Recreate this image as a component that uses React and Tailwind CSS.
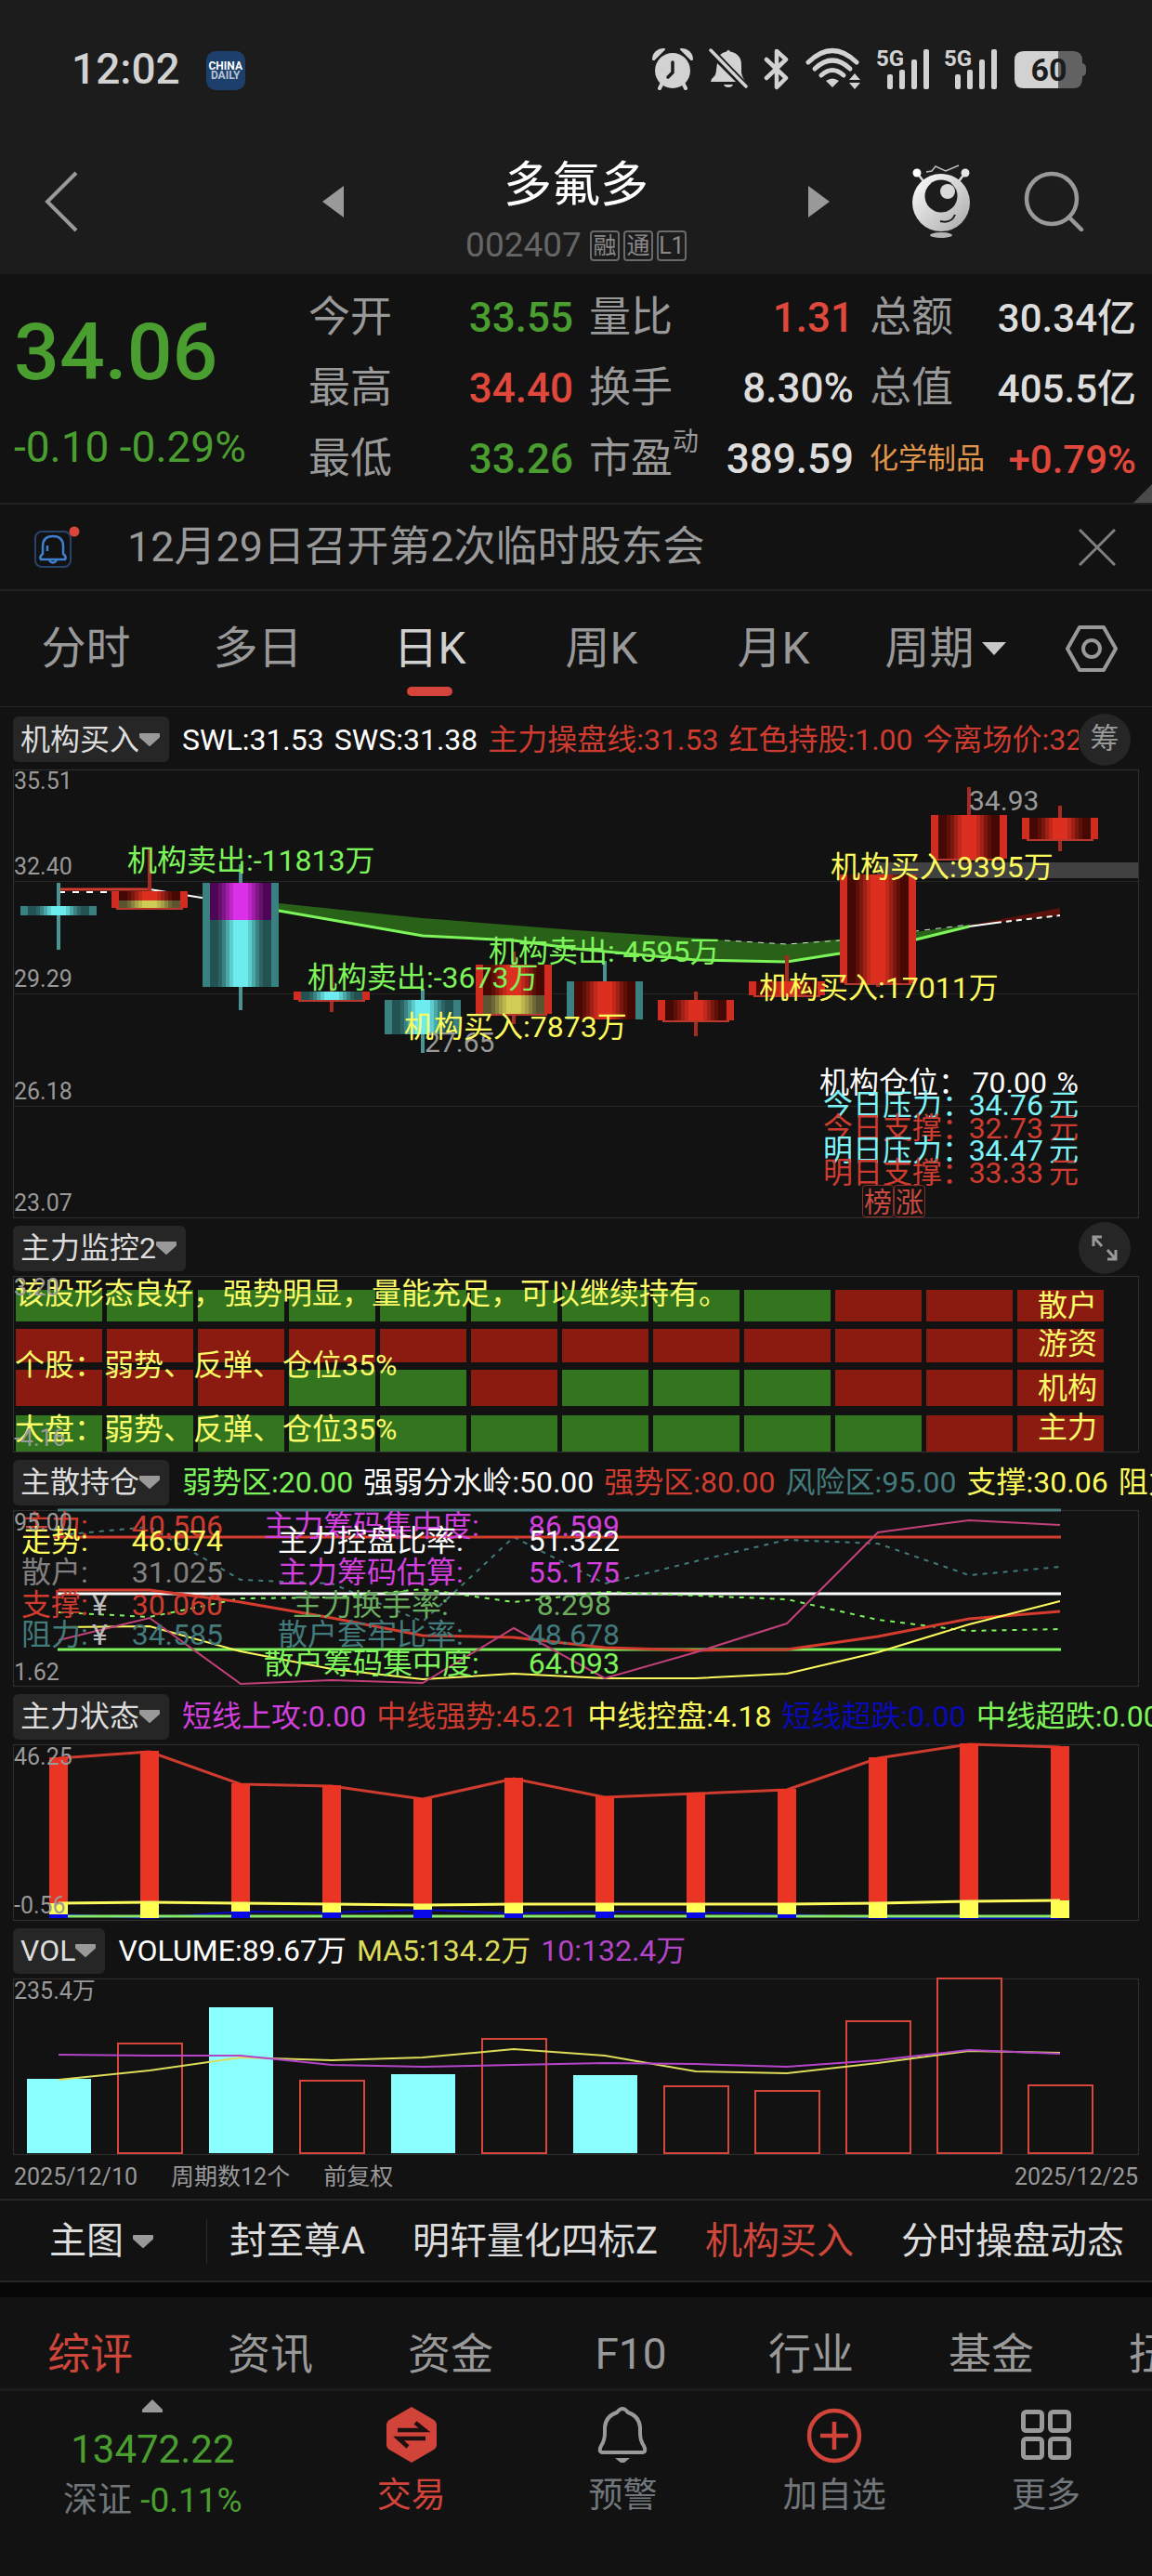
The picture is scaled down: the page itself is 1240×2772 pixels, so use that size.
import React from "react";

const COLUMN_X = Array.from({ length: 12 }, (_, i) => 63 + i * 98);

/* ---------- status bar ---------- */

function AlarmIcon() {
  return (
    <svg className="h-[46px] w-[44px]" viewBox="0 0 44 46" fill="#d2d2d2" aria-label="闹钟">
      <circle cx="22" cy="25" r="19" />
      <path d="M1 13 A11 11 0 0 1 13 2 L2 13 Z" stroke="#d2d2d2" strokeWidth="2" strokeLinejoin="round" />
      <path d="M43 13 A11 11 0 0 0 31 2 L42 13 Z" stroke="#d2d2d2" strokeWidth="2" strokeLinejoin="round" />
      <path d="M11 38 L8 44 M33 38 L36 44" stroke="#d2d2d2" strokeWidth="4" strokeLinecap="round" />
      <path d="M22 16 V27 L17 32" fill="none" stroke="#1c1c1c" strokeWidth="3.5" strokeLinecap="round" />
    </svg>
  );
}

function BellOffIcon() {
  return (
    <svg className="h-[46px] w-[42px]" viewBox="0 0 42 46" fill="#d2d2d2" aria-label="静音">
      <path d="M12 8 Q15 5 19 4.500 Q21 1 23 4.500 Q35 7 35 19 V27 Q36 33 40 37 Z" />
      <path d="M9 17 L29 37 H2 Q2 34 5 32 Q8 29 8 24 Z" />
      <path d="M16 40 H26 Q25 43 21 43 Q17 43 16 40 Z" />
      <path d="M2 3 L40 42" stroke="#d2d2d2" strokeWidth="3.500" strokeLinecap="round" />
    </svg>
  );
}

function BluetoothIcon() {
  return (
    <svg className="h-[46px] w-[28px]" viewBox="0 0 28 46" fill="none" stroke="#d2d2d2" strokeWidth="4.500" strokeLinejoin="round" strokeLinecap="round" aria-label="蓝牙">
      <path d="M3 13 L24 33 L14 43 V4 L24 13 L3 33" />
    </svg>
  );
}

function WifiIcon() {
  return (
    <svg className="h-[46px] w-[60px]" viewBox="0 0 60 46" fill="none" stroke="#d2d2d2" strokeWidth="5" strokeLinecap="round" aria-label="无线网络">
      <path d="M3 16 Q29 -9 55 16" />
      <path d="M10 23 Q29 5 48 23" />
      <path d="M17 30 Q29 19 41 30" />
      <path d="M22 36 Q29 31 36 36 L29 43 Z" fill="#d2d2d2" stroke="none" />
      <path d="M47 35 L53 28 L59 35 Z M47 38 L53 45 L59 38 Z" fill="#d2d2d2" stroke="none" />
    </svg>
  );
}

function SignalIcon() {
  return (
    <svg className="h-[46px] w-[56px] overflow-visible" viewBox="0 0 56 46" fill="#d2d2d2" aria-label="5G 信号">
      <text x="-1" y="20" className="text-[24px] font-bold">5G</text>
      <rect x="11" y="29" width="6" height="16" rx="2" />
      <rect x="24" y="24" width="6" height="21" rx="2" />
      <rect x="37" y="13" width="6" height="32" rx="2" />
      <rect x="50" y="2" width="6" height="43" rx="2" />
    </svg>
  );
}

function BatteryIcon() {
  return (
    <svg className="ml-[2px] h-[46px] w-[77px]" viewBox="0 0 77 46" aria-label="电量">
      <path d="M10 4 H47 V44 H10 Q0 44 0 34 V14 Q0 4 10 4 Z" fill="#d2d2d2" />
      <path d="M47 4 H63 Q73 4 73 14 V17 Q77 18 77 22 V27 Q77 30 73 31 V34 Q73 44 63 44 H47 Z" fill="#626262" />
      <text x="37" y="36" textAnchor="middle" fill="#1c1c1c" className="text-[34px] font-bold">60</text>
    </svg>
  );
}

function StatusBar() {
  return (
    <div className="flex h-[110px] items-end pr-[71px] pb-[13px] pl-[77px]">
      <span className="text-[46px] leading-[46px] font-medium text-[#d2d2d2]">12:02</span>
      <span className="ml-[28px] flex h-[42px] w-[42px] flex-col items-center justify-center rounded-[10px] bg-[#1d3f6c] text-[12px] leading-[10px] font-bold">
        <span className="text-white">CHINA</span>
        <span className="text-[#b8c4d4]">DAILY</span>
      </span>
      <div className="ml-auto flex items-center gap-[17px]">
        <AlarmIcon />
        <BellOffIcon />
        <BluetoothIcon />
        <WifiIcon />
        <SignalIcon />
        <SignalIcon />
        <BatteryIcon />
      </div>
    </div>
  );
}

/* ---------- title ---------- */

function Mascot() {
  return (
    <svg className="h-[80px] w-[64px]" viewBox="0 0 64 80" aria-hidden="true">
      <defs>
        <linearGradient id="mascot" x1="0" y1="0" x2="1" y2="1">
          <stop offset="0" stopColor="#ffffff" />
          <stop offset="1" stopColor="#a8a8a8" />
        </linearGradient>
      </defs>
      <path d="M16 8 L22 7 L26 2 L37 7 L51 1" fill="none" stroke="#bdbdbd" strokeWidth="1.500" />
      <path d="M6 9 L13 18 M58 9 L51 18" stroke="#d8d8d8" strokeWidth="2.500" />
      <circle cx="6" cy="9" r="4.500" fill="#ffffff" />
      <circle cx="58" cy="9" r="4.500" fill="#e4e4e4" />
      <circle cx="32" cy="41" r="31" fill="url(#mascot)" />
      <circle cx="32" cy="34" r="17.500" fill="#1c1c1c" />
      <circle cx="39" cy="29" r="8" fill="#d8d8d8" />
      <path d="M31 61 Q43 64 47 54" fill="none" stroke="#1c1c1c" strokeWidth="2" />
      <ellipse cx="32" cy="76" rx="12" ry="3" fill="#b5b5b5" />
    </svg>
  );
}

function Tag({ children }) {
  return (
    <span className="flex h-[33px] w-[32px] items-center justify-center rounded-[4px] border-2 border-[#6a6a6a] text-[25px] leading-[25px] text-[#888]">
      {children}
    </span>
  );
}

function TitleBar() {
  return (
    <header className="grid h-[185px] grid-cols-[1fr_500px_1fr] pt-[58px]">
      <div className="flex items-start justify-between pl-[47px]">
        <button aria-label="返回" className="pt-[16px]">
          <svg className="h-[66px] w-[38px]" viewBox="0 0 38 66" fill="none" stroke="#999" strokeWidth="4">
            <path d="M35 2 L4 33 L35 64" />
          </svg>
        </button>
        <button aria-label="上一只" className="pt-[32px]">
          <svg className="h-[34px] w-[23px]" viewBox="0 0 23 34" fill="#999"><path d="M23 0 V34 L0 17 Z" /></svg>
        </button>
      </div>
      <div className="flex flex-col items-center pt-[2px]">
        <h1 className="text-[52px] leading-[60px] text-white">多氟多</h1>
        <div className="mt-[15px] flex items-center gap-[4px]">
          <span className="mr-[5px] text-[37px] leading-[38px] text-[#666]">002407</span>
          <Tag>融</Tag>
          <Tag>通</Tag>
          <Tag>L1</Tag>
        </div>
      </div>
      <div className="flex items-start pr-[72px]">
        <button aria-label="下一只" className="mr-auto pt-[32px]">
          <svg className="h-[34px] w-[23px]" viewBox="0 0 23 34" fill="#999"><path d="M0 0 V34 L23 17 Z" /></svg>
        </button>
        <button aria-label="助手" className="mr-[57px] pt-[9px]"><Mascot /></button>
        <button aria-label="搜索" className="pt-[15px]">
          <svg className="h-[66px] w-[66px]" viewBox="0 0 66 66" fill="none" stroke="#999" strokeWidth="4.500" strokeLinecap="round">
            <circle cx="30" cy="31" r="27" />
            <path d="M49 51 L62 64" />
          </svg>
        </button>
      </div>
    </header>
  );
}

/* ---------- quote ---------- */

function Metric({ label, sup, value, color }) {
  return (
    <div className="flex h-[76px] items-center justify-between">
      <dt className="relative text-[45px] font-normal text-[#999]">
        {label}
        {sup && <sup className="absolute top-[-4px] left-full text-[28px] leading-[40px]">{sup}</sup>}
      </dt>
      <dd className={"text-[44px] " + color}>{value}</dd>
    </div>
  );
}

function Quote() {
  return (
    <section className="relative flex h-[248px] border-b-2 border-[#222] text-[#ddd]">
      <div className="w-[332px] pl-[15px] text-[#4a9e30]">
        <div className="pt-[40px] text-[86px] leading-[88px] font-medium">34.06</div>
        <div className="mt-[34px] text-[46px] leading-[48px] whitespace-nowrap">-0.10 -0.29%</div>
      </div>
      <dl className="w-[285px] pt-[9px] font-medium">
        <Metric label="今开" value="33.55" color="text-[#4a9e30]" />
        <Metric label="最高" value="34.40" color="text-[#e0483c]" />
        <Metric label="最低" value="33.26" color="text-[#4a9e30]" />
      </dl>
      <dl className="ml-[17px] w-[285px] pt-[9px] font-medium">
        <Metric label="量比" value="1.31" color="text-[#e0483c]" />
        <Metric label="换手" value="8.30%" color="text-[#ddd]" />
        <Metric label="市盈" sup="动" value="389.59" color="text-[#ddd]" />
      </dl>
      <dl className="mr-[17px] ml-[17px] flex-1 pt-[9px] font-medium">
        <Metric label="总额" value={<span className="text-[42px]">30.34亿</span>} color="text-[#ddd]" />
        <Metric label="总值" value={<span className="text-[42px]">405.5亿</span>} color="text-[#ddd]" />
        <div className="flex h-[76px] items-center justify-between">
          <dt className="text-[31px] font-normal text-[#e0954c]">化学制品</dt>
          <dd className="text-[42px] text-[#e0483c]">+0.79%</dd>
        </div>
      </dl>
      <svg className="absolute right-0 bottom-0 h-[20px] w-[20px]" viewBox="0 0 20 20" fill="#4a4a4a"><path d="M20 0 V20 H0 Z" /></svg>
    </section>
  );
}

function Notice() {
  return (
    <section className="flex h-[93px] items-center border-b-2 border-[#222] pr-[39px] pl-[36px]">
      <svg className="h-[48px] w-[52px]" viewBox="0 0 52 48" fill="none">
        <rect x="2" y="7" width="38" height="38" rx="7" stroke="#27446c" strokeWidth="2" />
        <path d="M8 37 Q6 34 10 31 V23 Q10 12 21 12 Q32 12 32 23 V31 Q36 34 34 37 Z" stroke="#3f7fd0" strokeWidth="2.500" />
        <path d="M17 38 Q21 43 25 38 M15 22 V28" stroke="#3f7fd0" strokeWidth="2.500" />
        <circle cx="44" cy="7" r="5.500" fill="#d8463c" />
      </svg>
      <a href="#notice" className="ml-[49px] text-[45px] leading-[60px] text-[#999]">12月29日召开第2次临时股东会</a>
      <button aria-label="关闭" className="ml-auto">
        <svg className="h-[40px] w-[40px]" viewBox="0 0 40 40" stroke="#808080" strokeWidth="3"><path d="M1 1 L39 39 M39 1 L1 39" /></svg>
      </button>
    </section>
  );
}

/* ---------- period tabs ---------- */

function Periods() {
  const cell = "flex h-full flex-[185] items-center justify-center text-[48px] ";
  return (
    <nav className="flex h-[125px] items-center border-b border-[#262626] text-[#999]">
      <button className={cell}>分时</button>
      <button className={cell}>多日</button>
      <button className={cell + "relative text-[#d0d0d0]"} aria-current="true">
        日K
        <span className="absolute bottom-[11px] h-[10px] w-[49px] rounded-full bg-[#d5443a]" />
      </button>
      <button className={cell}>周K</button>
      <button className={cell}>月K</button>
      <button className={cell + "gap-[8px]"}>
        周期
        <svg className="h-[14px] w-[26px]" viewBox="0 0 26 14" fill="#c8c8c8"><path d="M0 0 H26 L13 14 Z" /></svg>
      </button>
      <button className="flex h-full flex-[130] items-center justify-center" aria-label="设置">
        <svg className="h-[52px] w-[56px]" viewBox="0 0 56 52" fill="none" stroke="#999" strokeWidth="4" strokeLinejoin="round">
          <path d="M15 3 H41 L54 26 L41 49 H15 L2 26 Z" />
          <circle cx="28" cy="26" r="9" />
        </svg>
      </button>
    </nav>
  );
}

/* ---------- indicator panels ---------- */

function Caret() {
  return (
    <svg className="h-[14px] w-[22px]" viewBox="0 0 22 14" fill="#999" stroke="#999" strokeWidth="2" strokeLinejoin="round">
      <path d="M1 1 H21 V4 L11 13 L1 4 Z" />
    </svg>
  );
}

function PanelHeader({ name, legend = [], height, children }) {
  return (
    <div className={"flex items-center pt-[2px] pl-[14px] " + height}>
      <button className="flex h-[49px] shrink-0 items-center rounded-[6px] bg-[#262626] pr-[10px] pl-[8px] text-[32px] text-[#ddd]">
        <span>{name}</span>
        <Caret />
      </button>
      <div className="ml-[14px] flex flex-1 gap-[11px] overflow-hidden text-[32px] leading-[48px] whitespace-nowrap">
        {legend.map(([text, color]) => (
          <span key={text} className={"shrink-0 " + color}>{text}</span>
        ))}
      </div>
      {children}
    </div>
  );
}

function Label({ x, y, fill, size = "text-[32px]", anchor, children }) {
  return (
    <text x={x} y={y} fill={fill} textAnchor={anchor} className={size}>
      {children}
    </text>
  );
}

function Frame({ top, bottom }) {
  return <rect x="14.500" y={top + 0.5} width="1211" height={bottom - top - 1} fill="none" stroke="#303030" />;
}

function Axis({ y, children }) {
  return <Label x="15" y={y} fill="#999" size="text-[25px]">{children}</Label>;
}

function Line({ ys, xs = COLUMN_X, stroke, width = 2, dash }) {
  return (
    <polyline
      points={ys.map((y, i) => xs[i] + "," + y).join(" ")}
      fill="none"
      stroke={stroke}
      strokeWidth={width}
      strokeDasharray={dash}
    />
  );
}

const SHADES = {
  red: ["#450802", "#5e1008", "#7a170e", "#a02016", "#c0281c", "#dc2f20"],
  cyan: ["#225252", "#2c6464", "#3a8282", "#4aa8a8", "#5ccccd", "#6cecee"],
  yellow: ["#5a5530", "#6e6838", "#8a8440", "#a8a048", "#bcb64e", "#d0cc54"],
  magenta: ["#4d0655", "#64106c", "#7e1786", "#a01fa8", "#c027c8", "#dc2fe8"],
};
const SHADE_HALF = [33, 24, 20, 16, 12, 8];

function Shaded({ x, top, bottom, tone }) {
  return SHADES[tone].map((fill, i) => (
    <rect key={fill} x={x - SHADE_HALF[i]} y={top} width={SHADE_HALF[i] * 2} height={bottom - top} fill={fill} />
  ));
}

const CANDLES = [
  { high: 950, low: 1022, edge: "teal", parts: [["cyan", 975, 985]] },
  { high: 914, low: 959, edge: "red", parts: [["red", 959, 969], ["yellow", 969, 977]] },
  { high: 930, low: 1087, edge: "teal", parts: [["magenta", 950, 990], ["cyan", 990, 1062]] },
  { high: 1041, low: 1089, edge: "red", parts: [["cyan", 1067, 1076]] },
  { high: 1064, low: 1133, edge: "teal", parts: [["cyan", 1076, 1113]] },
  { high: 1024, low: 1102, edge: "red", parts: [["red", 1038, 1071], ["yellow", 1071, 1091]] },
  { high: 1034, low: 1056, edge: "teal", parts: [["red", 1056, 1097]] },
  { high: 1067, low: 1115, edge: "red", parts: [["red", 1076, 1098]] },
  { high: 1028, low: 1071, edge: "red", parts: [["red", 1056, 1071]] },
  { high: 941, low: 1062, edge: "red", parts: [["red", 941, 1058]] },
  { high: 847, low: 930, edge: "red", parts: [["red", 877, 924]] },
  { high: 867, low: 916, edge: "red", parts: [["red", 880, 903]] },
];

function Candle({ x, high, low, edge, parts }) {
  const top = parts[0][1];
  const bottom = parts[parts.length - 1][2];
  const red = edge === "red";
  return (
    <g>
      <rect x={x - 2} y={high} width="4" height={low - high} fill={red ? "#a82a20" : "#4a9494"} />
      <rect x={x - 41} y={top} width="82" height={bottom - top} fill={red ? "#d02c20" : "#3a8080"} />
      {parts.map(([tone, a, b]) => <Shaded key={a} x={x} top={a} bottom={b} tone={tone} />)}
      {red && <rect x={x - 36} y={bottom} width="72" height="2" fill="#b8382e" />}
    </g>
  );
}

const FORECAST = [
  ["今日压力：", "34.76", 1200, "#7df3f8"],
  ["今日支撑：", "32.73", 1225, "#cf3c2f"],
  ["明日压力：", "34.47", 1249, "#7df3f8"],
  ["明日支撑：", "33.33", 1273, "#cf3c2f"],
];

function CandleChart() {
  const green = "#7df55a";
  const yellow = "#fdfb5c";
  return (
    <svg className="block w-full" viewBox="0 828 1240 483">
      <Frame top={828} bottom={1311} />
      <path d="M14 948.500 H1225 M14 1069.500 H1225 M14 1190.500 H1225" stroke="#262626" />
      <Axis y={849}>35.51</Axis>
      <Axis y={941}>32.40</Axis>
      <Axis y={1062}>29.29</Axis>
      <Axis y={1183}>26.18</Axis>
      <Axis y={1303}>23.07</Axis>
      <rect x="944" y="928" width="281" height="17" fill="#414141" />

      <path d="M210 962 L300 972 L455 988 L620 1001 L847 1016 L986 1003 L1043 995 L1072 993 L1043 997 L986 1011 L904 1026 L847 1035 L749 1033 L620 1021 L553 1012 L455 1007 L300 980 Z" fill="#2a6119" />
      <path d="M1043 996 L1141 977 V985 Z" fill="#5a110c" />
      <Line xs={[63, 161]} ys={[960, 960]} stroke="#ffffff" dash="7 8" />
      <Line xs={[161, 217, 259]} ys={[957, 966, 971]} stroke="#ffffff" />
      <Line xs={[63, 161]} ys={[957, 957]} stroke="#cf3c2f" width={3} />
      <Line xs={[780, 847, 904, 1043]} ys={[1012, 1016, 1012, 995]} stroke="#d8e8d8" width={1} dash="6 6" />
      <Line xs={[259, 300, 455, 553, 620, 749, 847, 904, 986, 1043]} ys={[976, 980, 1007, 1012, 1021, 1033, 1035, 1026, 1011, 997]} stroke={green} width={3} />
      <Line xs={[1043, 1072]} ys={[997, 993]} stroke="#ffffff" />
      <Line xs={[1072, 1141]} ys={[993, 985]} stroke="#ffffff" dash="6 5" />

      {CANDLES.map((candle, i) => <Candle key={COLUMN_X[i]} x={COLUMN_X[i]} {...candle} />)}

      <Label x="457" y="1132" fill="#999" size="text-[30px]">27.65</Label>
      <Label x="1043" y="872" fill="#999" size="text-[30px]">34.93</Label>
      <Label x="137" y="937" fill={green}>机构卖出:-11813万</Label>
      <Label x="331" y="1063" fill={green}>机构卖出:-3673万</Label>
      <Label x="526" y="1035" fill={green}>机构卖出:-4595万</Label>
      <Label x="435" y="1116" fill={yellow}>机构买入:7873万</Label>
      <Label x="894" y="944" fill={yellow}>机构买入:9395万</Label>
      <Label x="817" y="1074" fill={yellow}>机构买入:17011万</Label>

      <Label x="882" y="1176" fill="#ffffff">机构仓位：</Label>
      <Label x="1127" y="1176" fill="#ffffff" anchor="end">70.00</Label>
      <Label x="1161" y="1176" fill="#ffffff" anchor="end">%</Label>
      {FORECAST.map(([name, value, y, fill]) => (
        <g key={name}>
          <Label x="886" y={y} fill={fill}>{name}</Label>
          <Label x="1123" y={y} fill={fill} anchor="end">{value}</Label>
          <Label x="1161" y={y} fill={fill} anchor="end">元</Label>
        </g>
      ))}
      <rect x="928.500" y="1275.500" width="33" height="34" rx="3" fill="none" stroke="#8a2f28" />
      <rect x="962.500" y="1275.500" width="33" height="34" rx="3" fill="none" stroke="#8a2f28" />
      <Label x="930" y="1304" fill="#c84a3f" size="text-[30px]">榜</Label>
      <Label x="964" y="1304" fill="#c84a3f" size="text-[30px]">涨</Label>
    </svg>
  );
}

const HEAT_ROWS = [
  { top: 1388, bottom: 1422, cells: "GGGGGGGGGRRR", name: "散户", y: 1416 },
  { top: 1430, bottom: 1466, cells: "RRRRRRRRRRRR", name: "游资", y: 1457 },
  { top: 1474, bottom: 1513, cells: "RRRGGRGGGRRR", name: "机构", y: 1505 },
  { top: 1523, bottom: 1562, cells: "GGGGGGGGGGRR", name: "主力", y: 1547 },
];

function HeatChart() {
  const yellow = "#fbfb6a";
  return (
    <svg className="block w-full" viewBox="0 1373 1240 190">
      <Frame top={1373} bottom={1563} />
      {HEAT_ROWS.map((row) =>
        row.cells.split("").map((cell, i) => (
          <rect key={row.name + i} x={COLUMN_X[i] - 46} y={row.top} width="93" height={row.bottom - row.top} fill={cell === "G" ? "#33751f" : "#8b1a10"} />
        ))
      )}
      {HEAT_ROWS.map((row) => <Label key={row.name} x="1117" y={row.y} fill={yellow}>{row.name}</Label>)}
      <Label x="16" y="1403" fill={yellow}>该股形态良好，强势明显，量能充足，可以继续持有。</Label>
      <Label x="16" y="1480" fill={yellow}>个股：弱势、反弹、仓位35%</Label>
      <Label x="16" y="1549" fill={yellow}>大盘：弱势、反弹、仓位35%</Label>
      <Axis y={1394}>3.20</Axis>
      <Axis y={1556}>-4.16</Axis>
    </svg>
  );
}

const HOLDINGS_LEFT = [
  ["主力:", "40.506", 1653, "#cf3c2f"],
  ["走势:", "46.074", 1669, "#fdfb5c"],
  ["散户:", "31.025", 1703, "#808080"],
  ["支撑:", "30.060", 1738, "#cf3c2f"],
  ["阻力:", "34.585", 1770, "#437b7c"],
];
const HOLDINGS_RIGHT = [
  ["主力筹码集中度:", 284, "86.599", 667, 1653, "#d13fdd"],
  ["主力控盘比率:", 299, "51.322", 667, 1669, "#ffffff"],
  ["主力筹码估算:", 299, "55.175", 667, 1703, "#d13fdd"],
  ["主力换手率:", 315, "8.298", 658, 1738, "#6aad5e"],
  ["散户套牢比率:", 299, "48.678", 667, 1770, "#437b7c"],
  ["散户筹码集中度:", 284, "64.093", 667, 1801, "#7df55a"],
];

function HoldingsChart() {
  return (
    <svg className="block w-full overflow-visible" viewBox="0 1625 1240 190">
      <Frame top={1625} bottom={1815} />
      <Line ys={[1652, 1643, 1700, 1704, 1745, 1654, 1704, 1680, 1657, 1661, 1695, 1686]} stroke="#437b7c" dash="5 6" />
      <Line xs={[62, 1142]} ys={[1625, 1625]} stroke="#437b7c" width={3} />
      <Line xs={[62, 1142]} ys={[1654, 1654]} stroke="#d53c2e" width={3} />
      <Line xs={[62, 1142]} ys={[1715, 1715]} stroke="#ffffff" width={3} />
      <Line xs={[62, 1142]} ys={[1775, 1775]} stroke="#7df55a" width={3} />
      <Line ys={[1735, 1740, 1720, 1719, 1710, 1724, 1713, 1717, 1721, 1743, 1755, 1753]} stroke="#7df55a" dash="5 6" />
      <Line ys={[1711, 1711, 1724, 1741, 1760, 1762, 1773, 1776, 1775, 1761, 1742, 1734]} stroke="#d53c2e" width={3} />
      <Line ys={[1751, 1750, 1777, 1796, 1807, 1801, 1806, 1806, 1801, 1778, 1748, 1723]} stroke="#fdfb5c" />
      <Line ys={[1765, 1741, 1812, 1808, 1811, 1752, 1806, 1778, 1747, 1649, 1636, 1641]} stroke="#c2407a" />
      {HOLDINGS_LEFT.map(([name, value, y, fill]) => (
        <g key={name}>
          <Label x="23" y={y} fill={fill}>{name}</Label>
          <Label x="240" y={y} fill={fill} anchor="end">{value}</Label>
        </g>
      ))}
      <Label x="99" y="1738" fill="#bbb">¥</Label>
      <Label x="99" y="1770" fill="#bbb">¥</Label>
      {HOLDINGS_RIGHT.map(([name, x, value, end, y, fill]) => (
        <g key={name}>
          <Label x={x} y={y} fill={fill}>{name}</Label>
          <Label x={end} y={y} fill={fill} anchor="end">{value}</Label>
        </g>
      ))}
      <Axis y={1647}>95.00</Axis>
      <Axis y={1808}>1.62</Axis>
    </svg>
  );
}

const STATE_TOPS = [1891, 1884, 1919, 1921, 1935, 1913, 1933, 1929, 1925, 1891, 1876, 1879];
const CONTROL_TOPS = [2048, 2047, 2048, 2049, 2050, 2049, 2049, 2049, 2049, 2048, 2046, 2045];
const OVERSOLD_TOPS = [2060, 2064, 2057, 2058, 2055, 2059, 2057, 2058, 2060, 2064, 2064, 2064];

function StateChart() {
  return (
    <svg className="block w-full overflow-visible" viewBox="0 1877 1240 190">
      <Frame top={1877} bottom={2067} />
      <Line ys={OVERSOLD_TOPS} stroke="#0808c8" />
      <Line xs={[63, 1141]} ys={[2062, 2062]} stroke="#86e868" width={3} />
      <Line ys={STATE_TOPS.map((y) => y + 1)} stroke="#cf3c2f" width={3} />
      {COLUMN_X.map((x, i) => (
        <g key={x}>
          <rect x={x - 10} y={STATE_TOPS[i]} width="20" height={CONTROL_TOPS[i] - STATE_TOPS[i]} fill="#ea3424" />
          <rect x={x - 10} y={CONTROL_TOPS[i]} width="20" height={2064 - CONTROL_TOPS[i]} fill="#ffff54" />
          <rect x={x - 10} y={OVERSOLD_TOPS[i]} width="20" height={2064 - OVERSOLD_TOPS[i]} fill="#0808e8" />
        </g>
      ))}
      <Line ys={CONTROL_TOPS} stroke="#fdfb5c" width={3} />
      <Axis y={1899}>46.25</Axis>
      <Axis y={2059}>-0.56</Axis>
    </svg>
  );
}

const VOLUMES = [2237, 2199, 2160, 2239, 2232, 2194, 2233, 2245, 2250, 2175, 2129, 2244];
const VOLUME_DOWN = [0, 2, 4, 6];

function VolumeChart() {
  return (
    <svg className="block w-full overflow-visible" viewBox="0 2129 1240 190">
      <Frame top={2129} bottom={2319} />
      {VOLUMES.map((y, i) =>
        VOLUME_DOWN.includes(i) ? (
          <rect key={i} x={COLUMN_X[i] - 34} y={y} width="69" height={2317 - y} fill="#8affff" />
        ) : (
          <rect key={i} x={COLUMN_X[i] - 34} y={y} width="69" height={2317 - y} fill="none" stroke="#d6463a" strokeWidth="2" />
        )
      )}
      <Line ys={[2238, 2228, 2214, 2217, 2214, 2205, 2212, 2229, 2231, 2220, 2207, 2209]} stroke="#dcdc5a" />
      <Line ys={[2211, 2212, 2212, 2222, 2224, 2222, 2220, 2221, 2224, 2217, 2206, 2210]} stroke="#b445c8" />
      <Axis y={2151}>235.4万</Axis>
    </svg>
  );
}

function Charts() {
  return (
    <main>
      <PanelHeader
        name="机构买入"
        height="h-[67px]"
        legend={[
          ["SWL:31.53", "text-white"],
          ["SWS:31.38", "text-white"],
          ["主力操盘线:31.53", "text-[#cf3c2f]"],
          ["红色持股:1.00", "text-[#cf3c2f]"],
          ["今离场价:32.73", "text-[#cf3c2f]"],
        ]}
      >
        <button className="mr-[23px] h-[56px] w-[56px] rounded-full bg-[#262626] text-[31px] text-[#999]">筹</button>
      </PanelHeader>
      <CandleChart />
      <PanelHeader name="主力监控2" height="h-[62px]">
        <button aria-label="全屏" className="mr-[23px] flex h-[56px] w-[56px] items-center justify-center rounded-full bg-[#262626]">
          <svg className="h-[30px] w-[30px]" viewBox="0 0 30 30" fill="none" stroke="#999" strokeWidth="3">
            <path d="M12 13 L3 3 M3 13 V3 H12 M18 17 L27 27 M27 17 V27 H18" />
          </svg>
        </button>
      </PanelHeader>
      <HeatChart />
      <PanelHeader
        name="主散持仓"
        height="h-[62px]"
        legend={[
          ["弱势区:20.00", "text-[#7df55a]"],
          ["强弱分水岭:50.00", "text-white"],
          ["强势区:80.00", "text-[#cf3c2f]"],
          ["风险区:95.00", "text-[#437b7c]"],
          ["支撑:30.06", "text-[#fdfb5c]"],
          ["阻力:34.59", "text-[#fdfb5c]"],
        ]}
      />
      <HoldingsChart />
      <PanelHeader
        name="主力状态"
        height="h-[62px]"
        legend={[
          ["短线上攻:0.00", "text-[#d13fdd]"],
          ["中线强势:45.21", "text-[#cf3c2f]"],
          ["中线控盘:4.18", "text-[#fdfb5c]"],
          ["短线超跌:0.00", "text-[#0a0ab8]"],
          ["中线超跌:0.00", "text-[#7df55a]"],
        ]}
      />
      <StateChart />
      <PanelHeader
        name="VOL"
        height="h-[62px]"
        legend={[
          ["VOLUME:89.67万", "text-white"],
          ["MA5:134.2万", "text-[#dcdc5a]"],
          ["10:132.4万", "text-[#b445c8]"],
        ]}
      />
      <VolumeChart />
      <div className="flex h-[47px] items-center pr-[15px] pl-[15px] text-[25px] text-[#999]">
        <span>2025/12/10</span>
        <span className="ml-[36px]">周期数12个</span>
        <span className="ml-[36px]">前复权</span>
        <span className="ml-auto">2025/12/25</span>
      </div>
    </main>
  );
}

/* ---------- bottom ---------- */

function IndicatorBar() {
  return (
    <nav className="flex h-[90px] items-center overflow-hidden border-y-2 border-[#262626] pt-[2px] text-[40px] whitespace-nowrap text-[#ddd]">
      <button className="flex h-[48px] w-[223px] shrink-0 items-center gap-[10px] border-r border-[#2c2c2c] pl-[53px]">
        主图
        <Caret />
      </button>
      <div className="flex gap-[51px] pl-[24px]">
        <button>封至尊A</button>
        <button>明轩量化四标Z</button>
        <button className="text-[#cf463a]">机构买入</button>
        <button>分时操盘动态</button>
      </div>
    </nav>
  );
}

const INFO_TABS = ["综评", "资讯", "资金", "F10", "行业", "基金", "扭亏"];

function InfoTabs() {
  return (
    <nav className="flex h-[101px] overflow-hidden border-b-3 border-[#1c1c1c] pt-[24px]">
      {INFO_TABS.map((tab, i) => (
        <button key={tab} className={"h-[74px] w-[194px] shrink-0 text-[46px] " + (i === 0 ? "text-[#cf463a]" : "text-[#999]")}>
          {tab}
        </button>
      ))}
    </nav>
  );
}

function TradeIcon() {
  return (
    <svg className="h-[64px] w-[58px]" viewBox="0 0 58 64">
      <path d="M29 2 L53 16 Q56 18 56 21 V43 Q56 46 53 48 L29 62 L5 48 Q2 46 2 43 V21 Q2 18 5 16 Z" fill="#d2433a" />
      <path d="M14 27 H43 L33 19 M44 36 H15 L25 45" fill="none" stroke="#1c1010" strokeWidth="4.500" />
    </svg>
  );
}

function BellIcon() {
  return (
    <svg className="h-[64px] w-[58px]" viewBox="0 0 58 64" fill="none" stroke="#999" strokeWidth="4" strokeLinejoin="round">
      <path d="M7 51 Q3 50 6 44 Q10 38 10 30 V24 Q11 12 23 8 Q29 0 35 8 Q47 12 48 24 V30 Q48 38 52 44 Q55 50 51 51 Z" />
      <path d="M21 57 H37 L31 62 H27 Z" fill="#999" stroke="none" />
    </svg>
  );
}

function AddIcon() {
  return (
    <svg className="h-[64px] w-[60px]" viewBox="0 0 60 64" fill="none" stroke="#d2433a" strokeWidth="4.500">
      <circle cx="30" cy="33" r="27" />
      <path d="M30 18 V48 M15 33 H45" />
    </svg>
  );
}

function MoreIcon() {
  return (
    <svg className="h-[64px] w-[58px]" viewBox="0 0 58 64" fill="none" stroke="#999" strokeWidth="5">
      <rect x="4.500" y="7.500" width="20" height="20" rx="3" />
      <rect x="33.500" y="7.500" width="20" height="20" rx="3" />
      <rect x="4.500" y="36.500" width="20" height="20" rx="3" />
      <rect x="33.500" y="36.500" width="20" height="20" rx="3" />
    </svg>
  );
}

const ACTIONS = [
  ["交易", TradeIcon, "text-[#d2433a]"],
  ["预警", BellIcon, "text-[#70767a]"],
  ["加自选", AddIcon, "text-[#70767a]"],
  ["更多", MoreIcon, "text-[#70767a]"],
];

function BottomBar() {
  return (
    <footer className="flex h-[199px]">
      <button className="flex flex-[329] flex-col items-center pt-[9px]">
        <svg className="h-[14px] w-[22px]" viewBox="0 0 22 14" fill="#999"><path d="M11 0 L22 11 V14 H0 V11 Z" /></svg>
        <span className="mt-[15px] text-[42px] leading-[50px] text-[#4a9e30]">13472.22</span>
        <span className="mt-[6px] text-[37px] leading-[48px] text-[#70767a]">
          深证 <span className="text-[#4a9e30]">-0.11%</span>
        </span>
      </button>
      {ACTIONS.map(([name, Icon, color]) => (
        <button key={name} className={"flex flex-[228] flex-col items-center pt-[15px] text-[37px] leading-[48px] " + color}>
          <Icon />
          <span className="mt-[10px]">{name}</span>
        </button>
      ))}
    </footer>
  );
}

export default function App() {
  return (
    <div className="min-h-screen overflow-hidden bg-[#121212] font-['Roboto','Noto_Sans_CJK_SC',sans-serif]">
      <div className="bg-[#1c1c1c]">
        <StatusBar />
        <TitleBar />
      </div>
      <Quote />
      <Notice />
      <Periods />
      <Charts />
      <IndicatorBar />
      <div className="h-[16px] bg-[#070707]" />
      <InfoTabs />
      <BottomBar />
    </div>
  );
}
